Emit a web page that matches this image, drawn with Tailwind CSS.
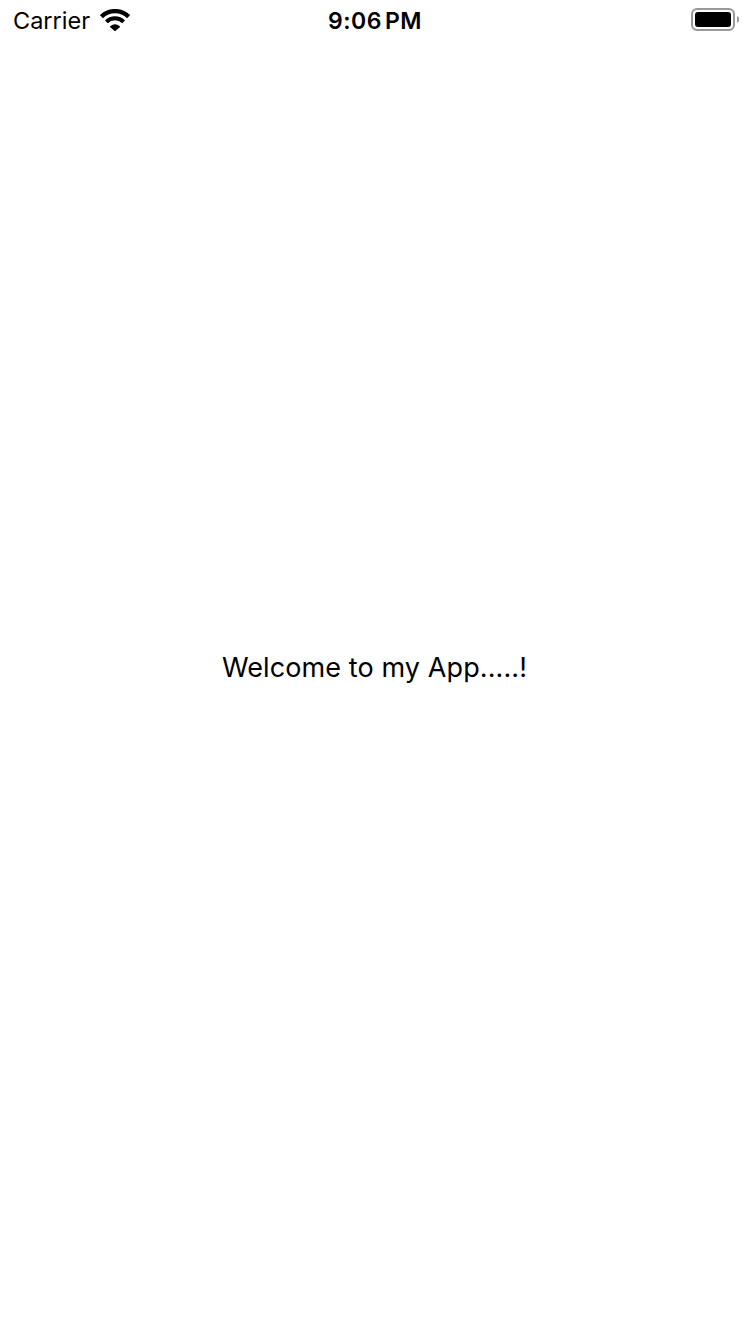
<!DOCTYPE html>
<html lang="en">
<head>
<meta charset="utf-8">
<title>Welcome</title>
<script src="https://cdn.jsdelivr.net/npm/@tailwindcss/browser@4"></script>
</head>
<body class="flex h-screen flex-col overflow-hidden bg-white font-[Inter,sans-serif] text-black">
  <header class="grid h-10 shrink-0 grid-cols-3 items-center pr-[11px] pl-[13px]">
    <div class="flex items-center gap-[9.5px]">
      <span class="pt-0.5 text-[23.5px] leading-[38px]">Carrier</span>
      <svg class="h-[22px] w-[30px]" viewBox="0 0 30 22" fill="none" stroke="#000">
        <path d="M1.400 7.700a19.300 19.300 0 0 1 27.200 0" stroke-width="4.300"/>
        <path d="M6.400 12.800a12.200 12.200 0 0 1 17.200 0" stroke-width="4"/>
        <path d="M10.200 17.200q4.800-4 9.600 0q.5.500 0 1L15.600 21.700q-.6.500-1.200 0L10.200 18.200q-.5-.5 0-1z" fill="#000" stroke="none"/>
      </svg>
    </div>
    <div class="pt-0.5 pr-0.5 text-center text-[23px] leading-[38px] font-semibold tracking-[0.55px] whitespace-nowrap [word-spacing:-3.500px]">9:06 PM</div>
    <svg class="h-6 w-12 justify-self-end" viewBox="0 0 48 24" fill="none">
      <rect x="1" y="1" width="42" height="21" rx="5" stroke="#999" stroke-width="2"/>
      <rect x="4" y="4" width="36" height="15" rx="3" fill="#000"/>
      <path d="M46 8v7c1.500-.6 2.200-2 2.200-3.500S47.500 8.600 46 8z" fill="#999"/>
    </svg>
  </header>
  <main class="-mt-10 flex flex-1 items-center justify-center">
    <p class="pt-0.5 pr-px text-[27px] leading-9 tracking-[0.1px] whitespace-nowrap">Welcome to my App.....!</p>
  </main>
</body>
</html>
